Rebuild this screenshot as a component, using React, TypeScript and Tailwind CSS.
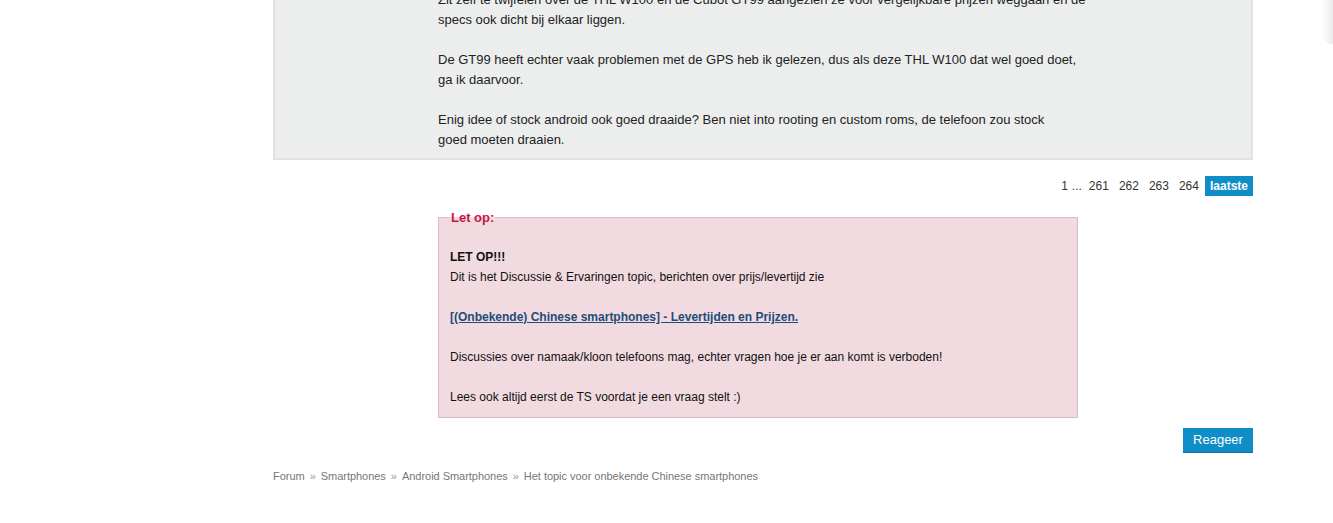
const pages = ["261", "262", "263", "264"];

const crumbs = [
  "Forum",
  "Smartphones",
  "Android Smartphones",
  "Het topic voor onbekende Chinese smartphones",
];

const App = () => {
  return (
    <div
      className="relative min-h-[523px] bg-white overflow-hidden"
      style={{ fontFamily: '"Liberation Sans", Arial, sans-serif' }}
    >
      <div className="absolute right-0 top-0 h-[44px] w-[12px] bg-gradient-to-r from-white to-[#ececec] rounded-bl-[12px]" />

      <div className="ml-[273px] w-[980px] -mt-[14px]">
        {/* post */}
        <div className="flex border-2 border-[#e2e2e2] bg-[#eceeed] pt-[2px] pb-[8px]">
          <div className="w-[163px] shrink-0" />
          <div className="w-[680px] text-[13px] leading-[20px] text-[#222]">
            Zit zelf te twijfelen over de THL W100 en de Cubot GT99 aangezien ze
            voor vergelijkbare prijzen weggaan en de
            <br />
            specs ook dicht bij elkaar liggen.
            <br />
            <br />
            De GT99 heeft echter vaak problemen met de GPS heb ik gelezen, dus
            als deze THL W100 dat wel goed doet,
            <br />
            ga ik daarvoor.
            <br />
            <br />
            Enig idee of stock android ook goed draaide? Ben niet into rooting en
            custom roms, de telefoon zou stock
            <br />
            goed moeten draaien.
          </div>
        </div>

        {/* pagination */}
        <div className="mt-[16px] flex justify-end items-center text-[12px] text-[#333]">
          <span className="px-[3px]">1</span>
          <span className="pl-[1px] pr-[2px]">...</span>
          {pages.map((p) => (
            <span key={p} className="px-[5px] text-[#333]">
              {p}
            </span>
          ))}
          <span className="ml-[1px] bg-[#0f8dc6] text-white font-bold px-[5px] h-[20px] leading-[20px]">
            laatste
          </span>
        </div>

        {/* notice */}
        <div className="ml-[165px] w-[640px] mt-[14px]">
          <fieldset className="border border-[#d8bcc4] bg-[#f2dbe0] px-[11px] pb-[10px]">
            <legend className="px-[1px] text-[13px] font-bold text-[#c8173f] leading-[15px]">
              Let op:
            </legend>
            <div className="pt-[22px] text-[12px] leading-[20px] text-[#111]">
              <b>LET OP!!!</b>
              <br />
              Dit is het Discussie &amp; Ervaringen topic, berichten over
              prijs/levertijd zie
              <br />
              <br />
              <a className="font-bold underline text-[#1d4d79]">
                [(Onbekende) Chinese smartphones] - Levertijden en Prijzen.
              </a>
              <br />
              <br />
              Discussies over namaak/kloon telefoons mag, echter vragen hoe je er
              aan komt is verboden!
              <br />
              <br />
              Lees ook altijd eerst de TS voordat je een vraag stelt :)
            </div>
          </fieldset>
        </div>

        {/* reply */}
        <div className="mt-[10px] flex justify-end">
          <button className="w-[70px] h-[25px] bg-[#0f8dc6] text-white text-[13px] border-b border-[#0b74a6]">
            Reageer
          </button>
        </div>

        {/* breadcrumb */}
        <div className="mt-[16px] flex items-center text-[11px] text-[#777] leading-[14px] tracking-[-0.03px]">
          {crumbs.map((c, i) => (
            <span key={c} className="flex items-center">
              {i > 0 && <span className="px-[5px] text-[#999]">»</span>}
              <span>{c}</span>
            </span>
          ))}
        </div>
      </div>
    </div>
  );
};

export default App;
